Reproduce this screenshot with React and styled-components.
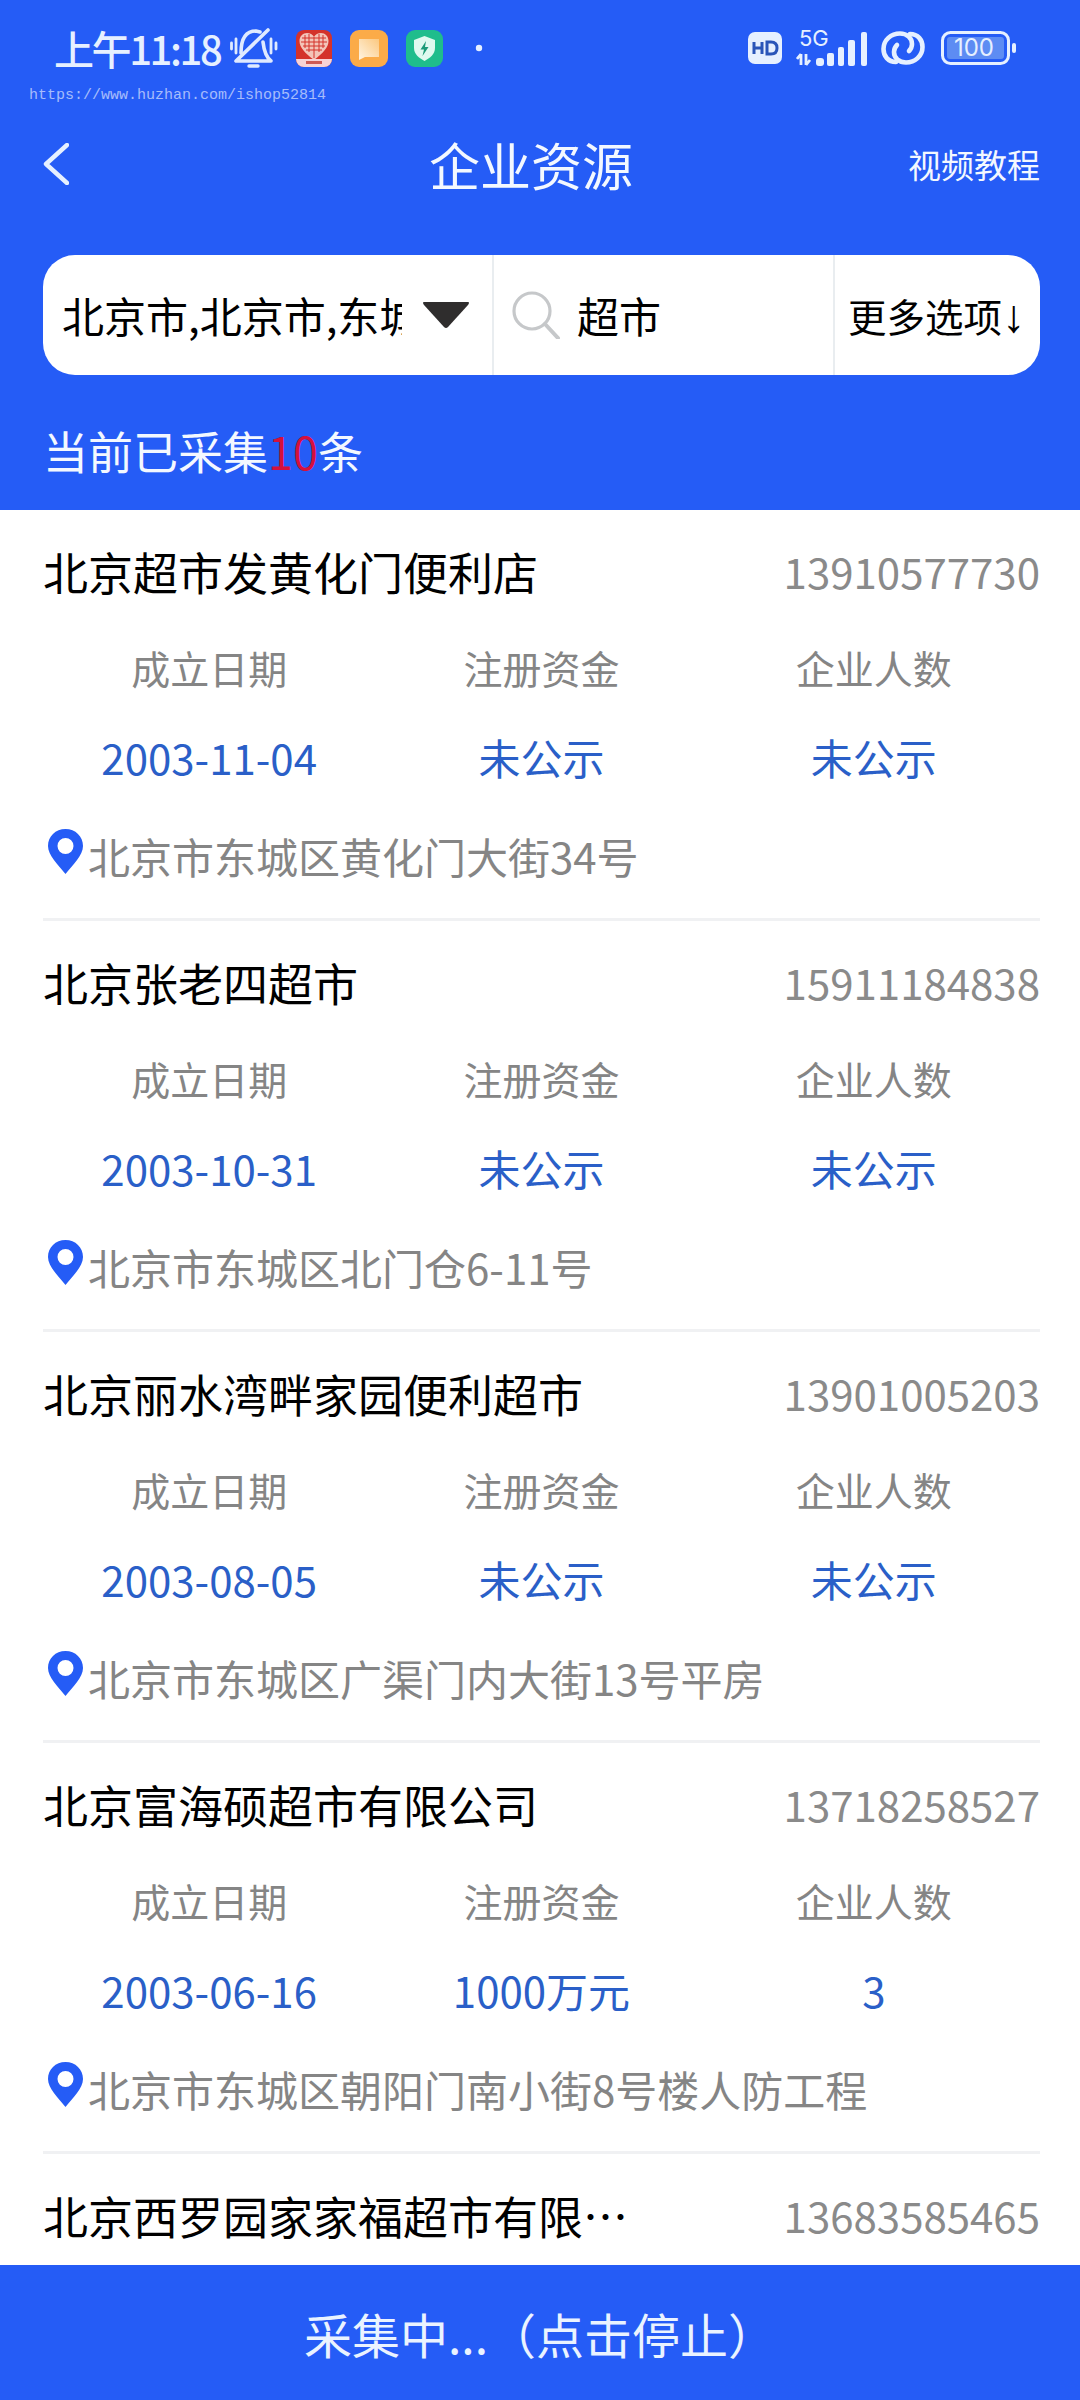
import React from "react";
import styled, { createGlobalStyle } from "styled-components";

const Global = createGlobalStyle`
  html, body { margin: 0; padding: 0; background: #fff; }
  body { font-family: "Noto Sans CJK SC", "Noto Sans", sans-serif; }
  * { box-sizing: border-box; }
`;

const Page = styled.div`
  width: 1080px;
  height: 2400px;
  display: flex;
  flex-direction: column;
  overflow: hidden;
  background: #fff;
`;
const Header = styled.header`
  background: #255cf6;
  color: #fff;
  height: 510px;
  flex: none;
  display: flex;
  flex-direction: column;
`;
const StatusBar = styled.div`
  height: 88px;
  padding: 8px 0 0 54px;
  display: flex;
  align-items: center;
  color: #e6f0ff;
`;
const Clock = styled.span`
  font-family: "Noto Sans CJK SC", sans-serif;
  font-size: 40px;
  font-weight: 500;
  letter-spacing: -2.4px;
  line-height: 48px;
  width: 176px;
  flex: none;
  white-space: nowrap;
`;
const StatusGap = styled.span`
  width: ${(p) => p.$w}px;
  flex: none;
`;
const Watermark = styled.div`
  height: 14px;
  margin-top: 1px;
  line-height: 14px;
  padding-left: 29px;
  font-family: "Liberation Mono", monospace;
  font-size: 15px;
  color: rgba(255, 255, 255, 0.6);
`;
const NavBar = styled.div`
  height: 118px;
  margin-top: 2px;
  padding: 0 40px 0 43px;
  display: grid;
  grid-template-columns: 1fr auto 1fr;
  align-items: center;
`;
const BackButton = styled.span`
  display: flex;
  align-items: center;
`;
const NavTitle = styled.h1`
  margin: 0 21px 0 0;
  font-size: 51px;
  font-weight: 400;
  line-height: 60px;
  color: #f3f8ff;
`;
const NavLink = styled.span`
  justify-self: end;
  font-size: 33px;
  line-height: 40px;
  color: #f3f8ff;
`;
const SearchBar = styled.div`
  margin: 32px 40px 0 43px;
  height: 120px;
  flex: none;
  background: #fff;
  border-radius: 32px;
  display: grid;
  grid-template-columns: 451px 341px 205px;
  color: #000;
  overflow: hidden;
`;
const Cell = styled.div`
  display: flex;
  align-items: center;
  border-right: ${(p) => (p.$last ? "none" : "2px solid #e9edf0")};
  padding-left: ${(p) => p.$pl}px;
`;
const RegionText = styled.span`
  width: 340px;
  flex: none;
  overflow: hidden;
  white-space: nowrap;
  font-size: 42px;
  line-height: 56px;
`;
const QueryText = styled.span`
  font-size: 42px;
  line-height: 56px;
  margin-left: 17px;
`;
const MoreText = styled.span`
  font-size: 38.5px;
  line-height: 50px;
  white-space: nowrap;
`;
const MoreArrow = styled.span`
  font-family: "Liberation Sans", sans-serif;
  font-size: 46px;
  line-height: 1;
`;
const Counter = styled.div`
  padding-left: 43px;
  margin-top: 46px;
  font-size: 45px;
  line-height: 60px;
  color: #f3f8ff;
`;
const Red = styled.span`
  color: #d5103c;
`;
const List = styled.main`
  flex: 1;
  min-height: 0;
  overflow: hidden;
  padding: 0 40px 0 43px;
`;
const Item = styled.article`
  height: 411px;
  border-bottom: 3px solid #f0f1f3;
`;
const TitleRow = styled.div`
  height: 124px;
  display: flex;
  justify-content: space-between;
  align-items: center;
`;
const Name = styled.h2`
  margin: 0;
  font-size: 45px;
  font-weight: 400;
  line-height: 60px;
  color: #000;
  max-width: 640px;
  white-space: nowrap;
`;
const Phone = styled.span`
  font-size: 42px;
  color: #8a8a8a;
  line-height: 60px;
  margin-bottom: 3px;
`;
const Stats = styled.div`
  display: grid;
  grid-template-columns: repeat(3, 1fr);
  grid-template-rows: 66px 114px;
  align-items: center;
  justify-items: center;
`;
const Label = styled.span`
  font-size: 39px;
  line-height: 50px;
  color: #858585;
`;
const Value = styled.span`
  font-size: 42px;
  line-height: 56px;
  color: #2a5fc8;
`;
const Address = styled.div`
  height: 82px;
  display: flex;
  align-items: center;
  padding-left: 5px;
  font-size: 42px;
  color: #858585;
`;
const AddressText = styled.span`
  margin-left: 5px;
`;
const Pin = styled.svg`
  flex: none;
  width: 35px;
  height: 45px;
  margin-bottom: 8px;
`;
const Footer = styled.footer`
  flex: none;
  height: 135px;
  background: #255cf6;
  color: #eaf3ff;
  font-size: 48px;
  display: flex;
  align-items: center;
  justify-content: center;
`;

const MuteIcon = () => (
  <svg width="48" height="40" viewBox="0 0 48 40" fill="none" stroke="#dfeaff" strokeLinecap="round" strokeLinejoin="round">
    <path d="M11 25 C11 12 15 3 26 3 L30 4" strokeWidth="3.6" />
    <path d="M38 2 L6 33 H41 C36 29 34 23 33 14" strokeWidth="3.6" />
    <path d="M19 38 H28" strokeWidth="3.4" />
    <path d="M1.5 15 V21 M6 11 V25 M41 11 V25 M46 15 V21" strokeWidth="2.8" />
  </svg>
);
const RedApp = () => (
  <svg width="36" height="37" viewBox="0 0 36 37">
    <rect width="36" height="37" rx="8" fill="#d4322a" />
    <path d="M18 30 C9 23 3.5 17.5 3.5 11 C3.5 6 7 3 11 3 C14 3 16.7 4.6 18 7 C19.3 4.6 22 3 25 3 C29 3 32.5 6 32.5 11 C32.5 17.5 27 23 18 30 Z" fill="#f3c4b8" />
    <path d="M6 8 H30 M5 12 H31 M7 16 H29 M10 20 H26 M9 5 V18 M13 4 V22 M18 7 V28 M23 4 V22 M27 5 V18" stroke="#d4322a" strokeWidth="1" />
    <path d="M0 29 H36 A8 8 0 0 1 28 37 H8 A8 8 0 0 1 0 29 Z" fill="#f8d3d5" />
    <rect x="10" y="31" width="16" height="3" fill="#cf5a55" />
  </svg>
);
const OrangeApp = () => (
  <svg width="38" height="37" viewBox="0 0 38 37">
    <defs>
      <linearGradient id="noteFill" x1="0" y1="1" x2="1" y2="0">
        <stop offset="0" stopColor="#fff4e2" />
        <stop offset="1" stopColor="#fbc880" />
      </linearGradient>
    </defs>
    <rect width="38" height="37" rx="9" fill="#fbab48" />
    <path d="M9 9 H29 V27 H15 L9 30 Z" fill="url(#noteFill)" />
  </svg>
);
const GreenApp = () => (
  <svg width="37" height="37" viewBox="0 0 37 37">
    <rect width="37" height="37" rx="9" fill="#1fbd8c" />
    <path d="M18.5 6 L29 10 V18 C29 24 24 28 18.5 31 C13 28 8 24 8 18 V10 Z" fill="#dff9ef" />
    <path d="M20 11 L14.5 19.5 H18 L16.5 26 L22.5 17 H19 Z" fill="#1a9a78" />
  </svg>
);
const Dot = () => (
  <svg width="8" height="8" viewBox="0 0 8 8">
    <circle cx="4" cy="4" r="3.2" fill="#e6f0ff" />
  </svg>
);
const HdIcon = () => (
  <svg width="34" height="32" viewBox="0 0 34 32">
    <rect width="34" height="32" rx="7" fill="#e6f0ff" />
    <path d="M6 10 V22 M6 16 H14 M14 10 V22" stroke="#2a55b8" strokeWidth="3" fill="none" />
    <path d="M19 10 V22 H23 C27 22 29 20 29 16 C29 12 27 10 23 10 Z" stroke="#2a55b8" strokeWidth="3" fill="none" />
  </svg>
);
const SignalIcon = () => (
  <svg width="72" height="38" viewBox="0 0 72 38">
    <text x="3" y="17" fontFamily="Inter, sans-serif" fontSize="22" fill="#e6f0ff">5G</text>
    <path d="M5 36 V25 M5 25 L1 30 M10 25 V36 M10 36 L14 31" stroke="#e6f0ff" strokeWidth="2.8" fill="none" />
    <rect x="20" y="29" width="8" height="8" rx="3" fill="#e6f0ff" />
    <rect x="31" y="24" width="7" height="13" rx="2" fill="#e6f0ff" />
    <rect x="42" y="18" width="6" height="19" rx="2" fill="#e6f0ff" />
    <rect x="52" y="11" width="7" height="26" rx="2" fill="#e6f0ff" />
    <rect x="65" y="3" width="6" height="34" rx="2" fill="#e6f0ff" />
  </svg>
);
const LinkIcon = () => (
  <svg width="44" height="34" viewBox="0 0 44 34" fill="none" stroke="#e6f0ff" strokeWidth="4.6" strokeLinecap="round">
    <path d="M15 31 C7 31 2.5 25 2.5 18 C2.5 9 10 2.5 19 2.5 C26 2.5 31 7 31 13 C31 16 30 18 28 20" />
    <path d="M29 3 C37 3 41.5 9 41.5 16 C41.5 25 34 31.5 25 31.5 C18 31.5 13 27 13 21 C13 18 14 16 16 14" />
  </svg>
);
const BatteryIcon = () => (
  <svg width="76" height="34" viewBox="0 0 76 34">
    <rect x="1.5" y="1.5" width="66" height="31" rx="8" fill="none" stroke="#e6f0ff" strokeWidth="3" />
    <rect x="6" y="6" width="57" height="22" rx="3" fill="#5d8cf3" />
    <text x="33" y="25" textAnchor="middle" fontFamily="Inter, sans-serif" fontSize="24" fill="#e6f0ff">100</text>
    <rect x="71" y="12" width="4" height="10" rx="2" fill="#e6f0ff" />
  </svg>
);
const BackIcon = () => (
  <svg width="26" height="42" viewBox="0 0 26 42" fill="none" stroke="#e6f0ff" strokeWidth="4.4" strokeLinecap="round" strokeLinejoin="round">
    <path d="M24 2 L3 21 L24 40" />
  </svg>
);
const Triangle = () => (
  <svg width="48" height="28" viewBox="0 0 48 28" style={{ marginLeft: 20 }}>
    <path d="M2 1 H46 Q48 1 46 4 L26 26 Q24 28 22 26 L2 4 Q0 1 2 1 Z" fill="#2f2d2d" />
  </svg>
);
const SearchIcon = () => (
  <svg width="48" height="48" viewBox="0 0 48 48" fill="none" stroke="#c6c8ca" strokeWidth="3.2" strokeLinecap="round">
    <circle cx="20" cy="20" r="18" />
    <path d="M33 33 L46 47" strokeWidth="4" />
  </svg>
);
const PinIcon = () => (
  <Pin viewBox="0 0 35 45">
    <path fillRule="evenodd" fill="#255cf6" d="M17.5 0 C27.5 0 35 7.5 35 17 C35 26 25 36 17.5 45 C10 36 0 26 0 17 C0 7.5 7.5 0 17.5 0 Z M17.5 9 A8 8 0 1 0 17.5 25 A8 8 0 1 0 17.5 9 Z" />
  </Pin>
);

const items = [
  { name: "北京超市发黄化门便利店", phone: "13910577730", date: "2003-11-04", capital: "未公示", staff: "未公示", address: "北京市东城区黄化门大街34号" },
  { name: "北京张老四超市", phone: "15911184838", date: "2003-10-31", capital: "未公示", staff: "未公示", address: "北京市东城区北门仓6-11号" },
  { name: "北京丽水湾畔家园便利超市", phone: "13901005203", date: "2003-08-05", capital: "未公示", staff: "未公示", address: "北京市东城区广渠门内大街13号平房" },
  { name: "北京富海硕超市有限公司", phone: "13718258527", date: "2003-06-16", capital: "1000万元", staff: "3", address: "北京市东城区朝阳门南小街8号楼人防工程" },
  { name: "北京西罗园家家福超市有限…", phone: "13683585465", date: "", capital: "", staff: "", address: "" },
];

export default function App() {
  return (
    <Page>
      <Global />
      <Header>
        <StatusBar>
          <Clock>上午11:18</Clock>
          <MuteIcon />
          <StatusGap $w={18} />
          <RedApp />
          <StatusGap $w={18} />
          <OrangeApp />
          <StatusGap $w={18} />
          <GreenApp />
          <StatusGap $w={32} />
          <Dot />
          <StatusGap $w={265} />
          <HdIcon />
          <StatusGap $w={14} />
          <SignalIcon />
          <StatusGap $w={13} />
          <LinkIcon />
          <StatusGap $w={16} />
          <BatteryIcon />
        </StatusBar>
        <Watermark>https://www.huzhan.com/ishop52814</Watermark>
        <NavBar>
          <BackButton><BackIcon /></BackButton>
          <NavTitle>企业资源</NavTitle>
          <NavLink>视频教程</NavLink>
        </NavBar>
        <SearchBar>
          <Cell $pl={19}>
            <RegionText>北京市,北京市,东城区</RegionText>
            <Triangle />
          </Cell>
          <Cell $pl={18}>
            <SearchIcon />
            <QueryText>超市</QueryText>
          </Cell>
          <Cell $last $pl={13}>
            <MoreText>更多选项<MoreArrow>↓</MoreArrow></MoreText>
          </Cell>
        </SearchBar>
        <Counter>当前已采集<Red>10</Red>条</Counter>
      </Header>
      <List>
        {items.map((it) => (
          <Item key={it.phone}>
            <TitleRow>
              <Name>{it.name}</Name>
              <Phone>{it.phone}</Phone>
            </TitleRow>
            {it.date && (
              <>
                <Stats>
                  <Label>成立日期</Label>
                  <Label>注册资金</Label>
                  <Label>企业人数</Label>
                  <Value>{it.date}</Value>
                  <Value>{it.capital}</Value>
                  <Value>{it.staff}</Value>
                </Stats>
                <Address>
                  <PinIcon />
                  <AddressText>{it.address}</AddressText>
                </Address>
              </>
            )}
          </Item>
        ))}
      </List>
      <Footer>采集中...（点击停止）</Footer>
    </Page>
  );
}
